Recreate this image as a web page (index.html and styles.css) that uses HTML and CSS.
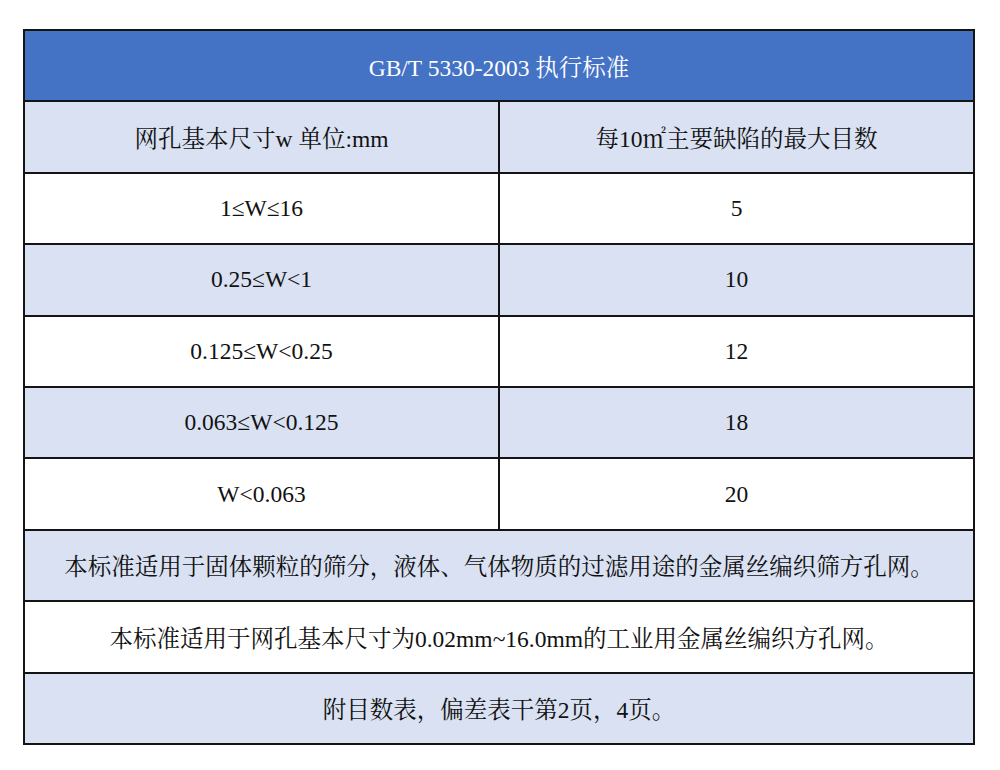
FILE: index.html
```html
<!DOCTYPE html>
<html lang="zh-CN">
<head>
<meta charset="utf-8">
<title>GB/T 5330-2003 执行标准</title>
<link rel="stylesheet" href="styles.css">
</head>
<body>
<div class="sheet">
  <div class="cell title span">GB/T 5330-2003 执行标准</div>
  <div class="cell tint">网孔基本尺寸w 单位:mm</div>
  <div class="cell tint">每10㎡主要缺陷的最大目数</div>
  <div class="cell">1≤W≤16</div>
  <div class="cell">5</div>
  <div class="cell tint">0.25≤W&lt;1</div>
  <div class="cell tint">10</div>
  <div class="cell">0.125≤W&lt;0.25</div>
  <div class="cell">12</div>
  <div class="cell tint">0.063≤W&lt;0.125</div>
  <div class="cell tint">18</div>
  <div class="cell">W&lt;0.063</div>
  <div class="cell">20</div>
  <div class="cell tint span">本标准适用于固体颗粒的筛分，液体、气体物质的过滤用途的金属丝编织筛方孔网。</div>
  <div class="cell span">本标准适用于网孔基本尺寸为0.02mm~16.0mm的工业用金属丝编织方孔网。</div>
  <div class="cell tint span">附目数表，偏差表干第2页，4页。</div>
</div>
</body>
</html>
```

FILE: styles.css
```css
html, body {
  margin: 0;
  padding: 0;
  background: #ffffff;
}

body {
  font-family: "Liberation Serif", "Noto Serif CJK SC", "Noto Sans CJK SC", serif;
  color: #111111;
}

.sheet {
  box-sizing: border-box;
  width: 952px;
  margin: 29px 0 0 23px;
  border: 2px solid #141414;
  background: #141414;
  display: grid;
  grid-template-columns: 1fr 1fr;
  grid-auto-rows: 69.4px;
  gap: 2px;
}

.cell {
  background: #ffffff;
  display: flex;
  align-items: center;
  justify-content: center;
  font-size: 23.5px;
  white-space: nowrap;
}

.tint {
  background: #d9e1f2;
}

.span {
  grid-column: 1 / span 2;
}

.title {
  background: #4472c4;
  color: #ffffff;
}
```
